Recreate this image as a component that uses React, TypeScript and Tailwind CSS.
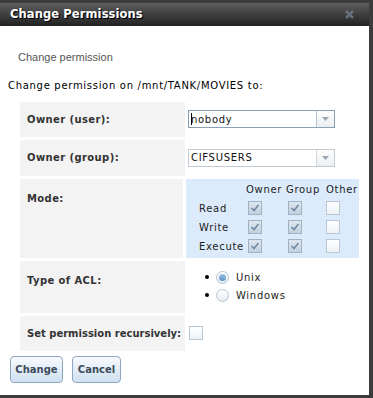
import { FC, ReactNode } from "react";

const Check: FC<{ checked?: boolean }> = ({ checked }) => (
  <span
    className={
      checked
        ? "flex h-[14px] w-[14px] items-center justify-center border border-[#9fb3c7] bg-gradient-to-b from-[#dfe7ef] to-[#c3d0dd]"
        : "flex h-[14px] w-[14px] items-center justify-center border border-[#b9c6d3] bg-gradient-to-b from-[#ffffff] to-[#eef2f6]"
    }
  >
    {checked && (
      <svg width="10" height="10" viewBox="0 0 10 10">
        <path d="M1.5 5 L4 7.5 L8.5 2" fill="none" stroke="#6f89a4" strokeWidth="1.6" />
      </svg>
    )}
  </span>
);

const Radio: FC<{ on?: boolean }> = ({ on }) => (
  <span className="flex h-[13px] w-[13px] items-center justify-center rounded-full border border-[#b5c3d1] bg-gradient-to-b from-[#ffffff] to-[#e6ecf2]">
    {on && <span className="h-[7px] w-[7px] rounded-full bg-gradient-to-b from-[#9cc0e4] to-[#5f93c6]" />}
  </span>
);

const Select: FC<{ value: string; focused?: boolean }> = ({ value, focused }) => (
  <div
    className={`flex h-[18px] w-[147px] border ${focused ? "border-[#8aa0b6]" : "border-[#c2cbd4]"} bg-white`}
  >
    <div className="flex flex-1 items-center pl-[2px] text-[10px] tracking-[0.7px] text-[#111]">
      {focused && <span className="mr-[-1px] h-[12px] w-px bg-black" />}
      {value}
    </div>
    <div
      className={`flex w-[18px] items-center justify-center border-l ${focused ? "border-[#b6c3d0]" : "border-[#d0d7de]"} bg-gradient-to-b from-[#fdfdfd] to-[#eceff2]`}
    >
      <svg width="7" height="4" viewBox="0 0 7 4">
        <path d="M0 0 H7 L3.5 4 Z" fill="#9aa6b2" />
      </svg>
    </div>
  </div>
);

const Row: FC<{ label: string; h: string; top?: boolean; children?: ReactNode }> = ({
  label,
  h,
  top,
  children,
}) => (
  <div className={`flex ${h}`}>
    <div
      className={`flex w-[165px] bg-[#f3f3f3] pl-[7px] text-[10px] font-bold tracking-[0.4px] text-[#333] ${top ? "items-start pt-[12px]" : "items-center"}`}
    >
      {label}
    </div>
    <div className="flex-1 pl-[3px]">{children}</div>
  </div>
);

export default function App() {
  return (
    <div className="h-[398px] w-[373px] bg-[#3b3b3b] pb-[3px] pr-[4px] pt-[3px] font-['DejaVu_Sans',sans-serif]">
      <div className="flex h-full flex-col bg-white">
        <div className="flex h-[23px] items-center justify-between bg-gradient-to-b from-[#5e5e5e] to-[#222] pl-[10px] pr-[14px]">
          <span className="text-[11.5px] font-bold tracking-[0.1px] text-white [text-shadow:1px_1px_0_#000]">
            Change Permissions
          </span>
          <svg width="11" height="11" viewBox="0 0 11 11">
            <path d="M2 2 L9 9 M9 2 L2 9" stroke="#66717c" strokeWidth="2.5" />
          </svg>
        </div>

        <div className="pl-[18px] pt-[23px] font-['Liberation_Sans',sans-serif] text-[11px] text-[#555]">
          Change permission
        </div>
        <div className="pl-[8px] pt-[12px] text-[10px] tracking-[0.7px] text-black">
          Change permission on /mnt/TANK/MOVIES to:
        </div>

        <div className="ml-[20px] mt-[9px] flex w-[339px] flex-col gap-[3px]">
          <Row label="Owner (user):" h="h-[35px]">
            <div className="flex h-full items-center">
              <Select value="nobody" focused />
            </div>
          </Row>
          <Row label="Owner (group):" h="h-[36px]">
            <div className="flex h-full items-center">
              <Select value="CIFSUSERS" />
            </div>
          </Row>
          <div className="flex h-[79px]">
            <div className="flex w-[165px] items-start bg-[#f3f3f3] pl-[7px] pt-[12px] text-[10px] font-bold tracking-[0.4px] text-[#333]">
              Mode:
            </div>
            <div className="ml-[3px] flex-1 bg-[#dcebfb] pt-[3px] text-[10px] tracking-[0.7px] text-[#222]">
              <div className="grid grid-cols-[60px_40px_40px_33px] items-center gap-y-[4px]">
                <span />
                <span>Owner</span>
                <span>Group</span>
                <span>Other</span>
                <span className="pl-[13px]">Read</span>
                <span className="pl-[2px]"><Check checked /></span>
                <span className="pl-[2px]"><Check checked /></span>
                <span><Check /></span>
                <span className="pl-[13px]">Write</span>
                <span className="pl-[2px]"><Check checked /></span>
                <span className="pl-[2px]"><Check checked /></span>
                <span><Check /></span>
                <span className="pl-[13px]">Execute</span>
                <span className="pl-[2px]"><Check checked /></span>
                <span className="pl-[2px]"><Check checked /></span>
                <span><Check /></span>
              </div>
            </div>
          </div>
          <Row label="Type of ACL:" h="h-[52px]" top>
            <div className="flex flex-col gap-[3px] pl-[17px] pt-[9px] text-[10px] tracking-[0.7px] text-[#222]">
              <div className="flex items-center gap-[7px]">
                <span className="h-[4px] w-[4px] rounded-full bg-black" />
                <Radio on />
                <span>Unix</span>
              </div>
              <div className="flex items-center gap-[7px]">
                <span className="h-[4px] w-[4px] rounded-full bg-black" />
                <Radio />
                <span>Windows</span>
              </div>
            </div>
          </Row>
          <div className="flex h-[35px]">
            <div className="flex w-[165px] items-center bg-[#f3f3f3] pl-[7px] text-[10px] font-bold tracking-[0px] text-[#333]">
              Set permission recursively:
            </div>
            <div className="flex items-center pl-[4px]">
              <Check />
            </div>
          </div>
        </div>

        <div className="flex gap-[9px] pl-[10px] pt-[5px]">
          <button className="h-[27px] w-[53px] rounded-[4px] border border-[#8ea7c0] bg-gradient-to-b from-[#f7fafd] to-[#cfe0f1] text-[10px] font-bold text-[#3d4c5c]">
            Change
          </button>
          <button className="h-[27px] w-[49px] rounded-[4px] border border-[#8ea7c0] bg-gradient-to-b from-[#f7fafd] to-[#cfe0f1] text-[10px] font-bold text-[#3d4c5c]">
            Cancel
          </button>
        </div>
      </div>
    </div>
  );
}
